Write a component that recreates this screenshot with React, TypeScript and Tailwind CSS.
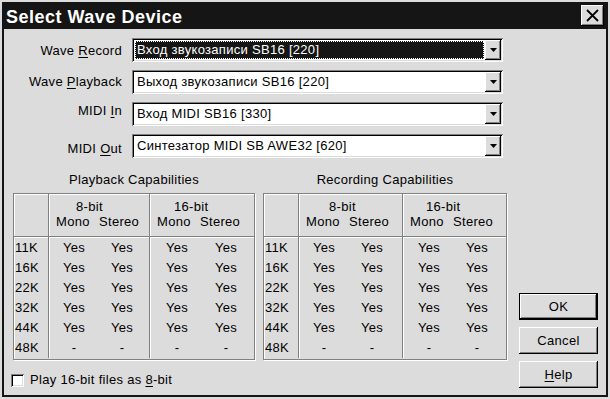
import React from "react";

const FONT = "font-['Liberation_Sans',Arial,sans-serif]";

function Triangle() {
  return (
    <svg width="7" height="4" viewBox="0 0 7 4">
      <path d="M0 0H7L3.5 4Z" fill="#000" />
    </svg>
  );
}

function Combo({ value, selected }: { value: string; selected?: boolean }) {
  return (
    <div className="h-[24px] w-[371px] bg-white p-[2px] flex shadow-[inset_1px_1px_0_#808080,inset_-1px_-1px_0_#fff,inset_2px_2px_0_#000,inset_-2px_-2px_0_#dcdcdc]">
      <div className="flex-1 flex p-[1px] min-w-0">
        {selected ? (
          <div className="flex-1 bg-[#151515] text-white border border-dotted border-white flex items-center pl-[1px] leading-[16px] whitespace-nowrap">
            {value}
          </div>
        ) : (
          <div className="flex-1 flex items-center pl-[2px] leading-[16px] whitespace-nowrap">{value}</div>
        )}
      </div>
      <div className="w-[16px] h-full bg-[#dcdcdc] flex items-center justify-center shadow-[inset_-1px_-1px_0_#000,inset_1px_1px_0_#fff,inset_-2px_-2px_0_#808080]">
        <Triangle />
      </div>
    </div>
  );
}

function Row({
  label,
  u,
  rest,
  value,
  selected,
  lc,
}: {
  label: string;
  u: string;
  rest: string;
  value: string;
  selected?: boolean;
  lc: string;
}) {
  return (
    <div className="flex items-center gap-[10px]">
      <div className={"w-[109px] text-right leading-[16px] whitespace-nowrap " + lc}>
        {label}
        <span className="underline underline-offset-[2px]">{u}</span>
        {rest}
      </div>
      <Combo value={value} selected={selected} />
    </div>
  );
}

type Cfg = {
  w: string;
  g1w: string;
  g1pl: string;
  g2pl: string;
  c1: [string, string];
  c2: [string, string];
};

const rates = ["11K", "16K", "22K", "32K", "44K", "48K"];

function GroupCol({
  label,
  width,
  pl,
  cols,
  last,
}: {
  label: string;
  width: string;
  pl: string;
  cols: [string, string];
  last?: boolean;
}) {
  return (
    <div
      className={
        "flex flex-col shadow-[inset_1px_0_0_#fff] " +
        width +
        (last ? "" : " border-r border-[#808080]")
      }
    >
      <div className="h-[43px] border-b border-[#808080] pt-[5px] leading-[15px] whitespace-nowrap">
        <div className={pl}>{label}</div>
        <div className="flex pl-[7px]">
          <span className="w-[43px]">Mono</span>
          <span>Stereo</span>
        </div>
      </div>
      <div className="pt-[1px] shadow-[inset_0_1px_0_#fff]">
        {rates.map((r, i) => (
          <div key={r} className="flex h-[20px] leading-[20px]">
            <span className={"text-center " + cols[0]}>{i === 5 ? "-" : "Yes"}</span>
            <span className={"text-center " + cols[1]}>{i === 5 ? "-" : "Yes"}</span>
          </div>
        ))}
      </div>
    </div>
  );
}

function CapTable({ title, cfg }: { title: string; cfg: Cfg }) {
  return (
    <div className={"flex flex-col " + cfg.w}>
      <div className="text-center leading-[16px] mb-[5px]">{title}</div>
      <div className="flex border border-[#808080] shadow-[inset_1px_1px_0_#fff,1px_1px_0_#fff] pb-[1px]">
        <div className="w-[35px] flex flex-col border-r border-[#808080] shadow-[inset_1px_0_0_#fff]">
          <div className="h-[43px] border-b border-[#808080]" />
          <div className="pt-[1px] shadow-[inset_0_1px_0_#fff]">
            {rates.map((r) => (
              <div key={r} className="h-[20px] leading-[20px] pl-[1px]">
                {r}
              </div>
            ))}
          </div>
        </div>
        <GroupCol label="8-bit" width={cfg.g1w} pl={cfg.g1pl} cols={cfg.c1} />
        <GroupCol label="16-bit" width="flex-1" pl={cfg.g2pl} cols={cfg.c2} last />
      </div>
    </div>
  );
}

function Btn({ children, def }: { children: React.ReactNode; def?: boolean }) {
  return (
    <div
      className={
        "h-[27px] w-[79px] flex items-center justify-center leading-[16px] bg-[#dcdcdc] " +
        (def
          ? "border border-black shadow-[inset_-1px_-1px_0_#000,inset_1px_1px_0_#fff,inset_-2px_-2px_0_#808080]"
          : "shadow-[inset_-1px_-1px_0_#000,inset_1px_1px_0_#fff,inset_-2px_-2px_0_#808080]")
      }
    >
      {children}
    </div>
  );
}

export default function App() {
  return (
    <div className={"w-[610px] h-[399px] bg-[#dcdcdc] p-[2px] text-[13px] tracking-[0.3px] text-black " + FONT}>
      <div className="h-full border-2 border-[#151515] flex flex-col bg-[#dcdcdc]">
        <div className="h-[25px] bg-[#151515] flex items-start justify-between pl-[2px] pr-[2px]">
          <div className="h-[25px] flex items-center text-white font-bold text-[18px] tracking-[0.5px] leading-[20px]">
            Select Wave Device
          </div>
          <div className="mt-[1px] w-[23px] h-[21px] bg-[#dcdcdc] flex items-center justify-center shadow-[inset_-1px_-1px_0_#000,inset_1px_1px_0_#fff,inset_-2px_-2px_0_#808080]">
            <svg width="13" height="13" viewBox="0 0 13 13">
              <path d="M1 1L12 12M12 1L1 12" stroke="#000" strokeWidth="1.8" />
            </svg>
          </div>
        </div>
        <div className="flex-1 flex pl-[9px] pr-[8px] pt-[9px] pb-[9px] gap-[12px]">
          <div className="w-[494px] flex flex-col">
            <div className="flex flex-col gap-[8px]">
              <Row label="Wave " u="R" rest="ecord" value="Вход звукозаписи SB16 [220]" selected lc="mt-[2px]" />
              <Row label="Wave " u="P" rest="layback" value="Выход звукозаписи SB16 [220]" lc="" />
              <Row label="MIDI " u="I" rest="n" value="Вход MIDI SB16 [330]" lc="mb-[6px]" />
              <Row label="MIDI " u="O" rest="ut" value="Синтезатор MIDI SB AWE32 [620]" lc="mt-[5px]" />
            </div>
            <div className="flex gap-[8px] mt-[14px]">
              <CapTable
                title="Playback Capabilities"
                cfg={{
                  w: "w-[242px]",
                  g1w: "w-[101px]",
                  g1pl: "pl-[27px]",
                  g2pl: "pl-[24px]",
                  c1: ["w-[50px]", "w-[46px]"],
                  c2: ["w-[54px]", "w-[44px]"],
                }}
              />
              <CapTable
                title="Recording Capabilities"
                cfg={{
                  w: "w-[244px]",
                  g1w: "w-[104px]",
                  g1pl: "pl-[30px]",
                  g2pl: "pl-[23px]",
                  c1: ["w-[50px]", "w-[46px]"],
                  c2: ["w-[52px]", "w-[44px]"],
                }}
              />
            </div>
            <div className="flex items-center mt-[12px] ml-[-2px] gap-[6px]">
              <div className="w-[13px] h-[13px] bg-white shadow-[inset_1px_1px_0_#808080,inset_-1px_-1px_0_#fff,inset_2px_2px_0_#000,inset_-2px_-2px_0_#dcdcdc]" />
              <div className="leading-[16px]">
                Play 16-bit files as <span className="underline underline-offset-[2px]">8</span>-bit
              </div>
            </div>
          </div>
          <div className="w-[79px] flex flex-col justify-end gap-[7px]">
            <Btn def>OK</Btn>
            <Btn>Cancel</Btn>
            <Btn>
              <span>
                <span className="underline underline-offset-[2px]">H</span>elp
              </span>
            </Btn>
          </div>
        </div>
      </div>
    </div>
  );
}
